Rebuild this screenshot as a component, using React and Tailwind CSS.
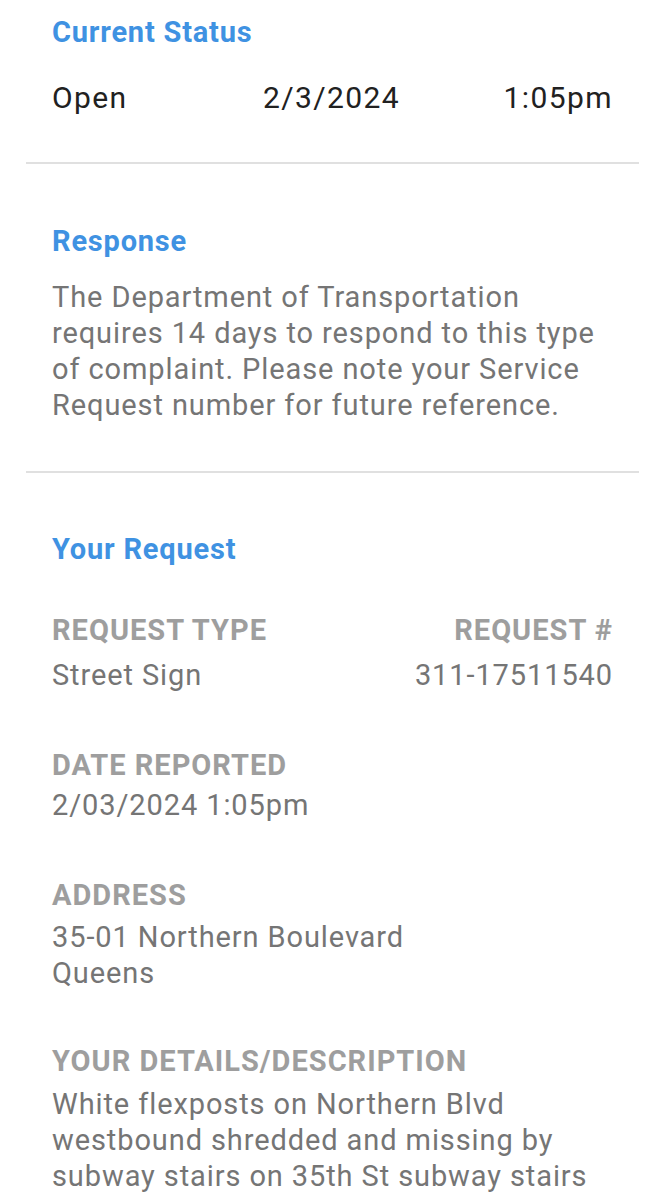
import React from 'react';

const Heading = ({ children }) => (
  <h2 className="text-[29px] leading-[36px] font-bold tracking-[0.8px] text-[#3f92e2]">{children}</h2>
);

const Field = ({ label, children, className = '', gap = 'mt-[6px]' }) => (
  <div className={className}>
    <div className="text-[29px] leading-[36px] font-bold uppercase tracking-[1px] text-[#9e9e9e]">{label}</div>
    <div className={`${gap} text-[29px] leading-[36px] tracking-[0.9px] text-[#757575]`}>{children}</div>
  </div>
);

const App = () => {
  return (
    <div className="w-[665px] min-h-[1200px] bg-white font-[Roboto,sans-serif]">
      {/* current status */}
      <section className="px-[52px] pt-[14px] pb-[46px]">
        <Heading>Current Status</Heading>
        <div className="mt-[30px] flex justify-between text-[30px] leading-[36px] tracking-[1.4px] text-[#212121]">
          <span>Open</span>
          <span className="pl-[32px]">2/3/2024</span>
          <span>1:05pm</span>
        </div>
      </section>

      <div className="mx-[26px] h-[2px] bg-[#e0e0e0]" />

      {/* response */}
      <section className="px-[52px] pt-[59px] pb-[48px]">
        <Heading>Response</Heading>
        <p className="mt-[20px] text-[29px] leading-[36px] tracking-[0.9px] text-[#757575]">
          The Department of Transportation requires 14 days to respond to this type of complaint. Please note your Service Request number for future reference.
        </p>
      </section>

      <div className="mx-[26px] h-[2px] bg-[#e0e0e0]" />

      {/* your request */}
      <section className="px-[52px] pt-[58px] pb-[20px]">
        <Heading>Your Request</Heading>

        <div className="mt-[45px] flex justify-between">
          <Field label="Request Type" gap="mt-[9px]">Street Sign</Field>
          <Field label="Request #" className="text-right" gap="mt-[9px]">311-17511540</Field>
        </div>

        <Field label="Date Reported" className="mt-[54px]" gap="mt-[4px]">2/03/2024 1:05pm</Field>

        <Field label="Address" className="mt-[54px]" gap="mt-[6px]">
          35-01 Northern Boulevard
          <br />
          Queens
        </Field>

        <Field label="Your Details/Description" className="mt-[52px]" gap="mt-[7px]">
          White flexposts on Northern Blvd westbound shredded and missing by subway stairs on 35th St subway stairs
        </Field>
      </section>
    </div>
  );
};

export default App;
